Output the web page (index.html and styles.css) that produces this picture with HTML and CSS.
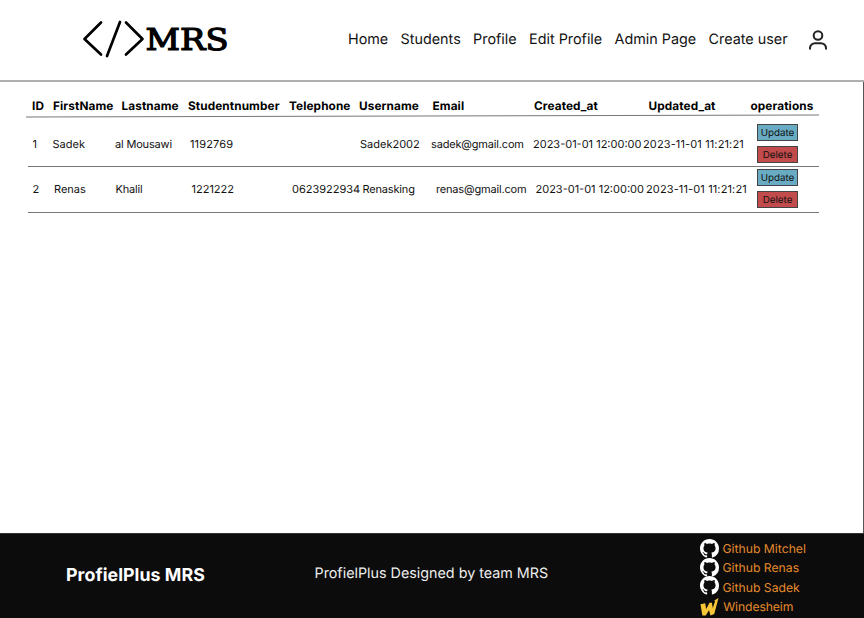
FILE: index.html
```html
<!DOCTYPE html>
<html lang="en">
<head>
<meta charset="utf-8">
<title>ProfielPlus MRS</title>
<link rel="stylesheet" href="styles.css">
</head>
<body>
<svg class="defs" aria-hidden="true">
<symbol id="github" viewBox="0 0 16 16"><path d="M8 0C3.58 0 0 3.58 0 8c0 3.54 2.29 6.53 5.47 7.59.4.07.55-.17.55-.38 0-.19-.01-.82-.01-1.49-2.01.37-2.53-.49-2.69-.94-.09-.23-.48-.94-.82-1.13-.28-.15-.68-.52-.01-.53.63-.01 1.08.58 1.23.82.72 1.21 1.87.87 2.33.66.07-.52.28-.87.51-1.07-1.78-.2-3.64-.89-3.64-3.95 0-.87.31-1.59.82-2.15-.08-.2-.36-1.02.08-2.12 0 0 .67-.21 2.2.82.64-.18 1.32-.27 2-.27s1.36.09 2 .27c1.53-1.04 2.2-.82 2.2-.82.44 1.1.16 1.92.08 2.12.51.56.82 1.27.82 2.15 0 3.07-1.87 3.75-3.65 3.95.29.25.54.73.54 1.48 0 1.07-.01 1.93-.01 2.2 0 .21.15.46.55.38A8.01 8.01 0 0 0 16 8c0-4.42-3.58-8-8-8z"/></symbol>
</svg>
<header class="header">
<svg class="logo" viewBox="0 0 150 40"><path d="M19 3.500 2.500 20 19 35.500M38 3 25 37M44 3.500l16.500 16.500L44 35.500"/><text x="63.500" y="30.700" textLength="83" lengthAdjust="spacingAndGlyphs">MRS</text></svg>
<nav class="nav"><a>Home</a><a>Students</a><a>Profile</a><a>Edit Profile</a><a>Admin Page</a><a>Create user</a></nav>
<svg class="user" viewBox="0 0 20 22"><circle cx="10" cy="6.500" r="4.300"/><path d="M2 20.500v-1.200c0-3.200 2.600-5.100 5-5.100h6c2.400 0 5 1.900 5 5.100v1.200"/></svg>
</header>
<main class="main">
<div class="row head"><b>ID</b><b>FirstName</b><b>Lastname</b><b>Studentnumber</b><b>Telephone</b><b>Username</b><b>Email</b><b>Created_at</b><b>Updated_at</b><b>operations</b></div>
<svg class="rule" viewBox="0 0 793 4"><path d="M0 3 793 1"/></svg>
<div class="row first"><span>1</span><span>Sadek</span><span class="tight">al Mousawi</span><span class="number">1192769</span><span></span><span>Sadek2002</span><span class="tight">sadek@gmail.com</span><span>2023-01-01 12:00:00</span><span class="number">2023-11-01 11:21:21</span><div class="ops"><button class="update">Update</button><button class="delete">Delete</button></div></div>
<div class="row second"><span>2</span><span>Renas</span><span class="tight">Khalil</span><span>1221222</span><span>0623922934</span><span class="tight">Renasking</span><span class="tight">renas@gmail.com</span><span>2023-01-01 12:00:00</span><span class="number">2023-11-01 11:21:21</span><div class="ops"><button class="update">Update</button><button class="delete">Delete</button></div></div>
</main>
<footer class="footer">
<strong class="brand">ProfielPlus MRS</strong>
<span class="credit">ProfielPlus Designed by team MRS</span>
<div class="links">
<a><svg><use href="#github"/></svg><span>Github Mitchel</span></a>
<a><svg><use href="#github"/></svg><span>Github Renas</span></a>
<a><svg><use href="#github"/></svg><span>Github Sadek</span></a>
<a><svg class="wind" viewBox="0 0 20 19"><path d="M.5 7 5.500 6 6.500 12 10 5.500 12.500 5.500 13.500 11 16 3.500 14.500 3.500 19.500 .5 15 17.500 11 19 9.500 13.500 6 19H2.500z"/></svg><span>Windesheim</span></a>
</div>
</footer>
</body>
</html>
```
FILE: styles.css
```css
* { box-sizing: border-box; }
body { margin: 0; width: 864px; height: 618px; overflow: hidden; display: flex; flex-direction: column; font-family: Inter, sans-serif; color: #111; background: #fff; text-rendering: geometricPrecision; }
.defs { display: none; }
.header { height: 82px; flex: none; display: flex; border-bottom: 2px solid #b0b0b0; }
.logo { width: 150px; height: 40px; margin: 19px 0 0 82px; flex: none; }
.logo path { fill: none; stroke: #000; stroke-width: 2.7; stroke-linecap: round; stroke-linejoin: round; }
.logo text { font: 30px "DejaVu Serif", serif; stroke: #000; stroke-width: 1.2; }
.nav { display: flex; gap: 12.4px; margin: 30px 0 0 116px; width: 459.5px; font-size: 14.35px; line-height: 20px; white-space: nowrap; }
.user { width: 20px; height: 22px; margin-top: 29px; fill: none; stroke: #222; stroke-width: 2; }
.main { flex: none; height: 451px; border-right: 1px solid #555; }
.row { display: grid; align-items: center; white-space: nowrap; font-size: 11px; }
.head { height: 32px; padding: 16px 0 0 32px; line-height: 16px; font-size: 11.8px; letter-spacing: .1px; color: #000; grid-template-columns: 21px 68.5px 66.5px 101px 70px 73.500px 101.500px 114.500px 102px auto; }
.rule { display: block; width: 793px; height: 4px; margin-left: 26px; stroke: #777; }
.first, .second { width: 791.5px; margin-left: 27.5px; padding-left: 5px; border-bottom: 1px solid #777; }
.first { height: 49px; padding-top: 4px; grid-template-columns: 20px 62.500px 75px 100px 70px 71px 102px 110px 114px auto; }
.second { height: 46px; padding-bottom: 2px; grid-template-columns: 21.500px 61.500px 76px 100.500px 70.500px 73.500px 99.500px 110.500px 111px auto; }
.tight { letter-spacing: -.17px; }
.number { letter-spacing: .13px; }
.ops { display: grid; gap: 5px; width: 41px; margin-top: -1px; }
button { display: block; height: 17px; padding: 2px 0 0; border: 1px solid #444; font: 9.8px/13px Inter, sans-serif; color: #111; text-rendering: inherit; }
.update { background: #68abc2; }
.delete { background: #c24b4b; }
.footer { flex: none; height: 85px; display: flex; background: #0c0c0c; color: #eee; border-top: 1px solid #333; }
.brand { width: 248.500px; flex: none; margin: 30px 0 0 66px; font-size: 17.800px; letter-spacing: .05px; line-height: 24px; color: #fff; }
.credit { width: 385px; flex: none; margin-top: 29px; font-size: 14.320px; line-height: 22px; }
.links { display: flex; flex-direction: column; margin-top: 5px; font-size: 12.200px; line-height: 19px; color: #e58a2c; white-space: nowrap; }
.links a { display: flex; height: 19.400px; }
.links a:nth-child(2) { margin-top: -.5px; }
.links a:nth-child(3) svg { margin-top: -1px; }
.links a:nth-child(3) span { margin-top: .6px; }
.links a:nth-child(4) span { margin: .6px 0 0 .7px; letter-spacing: -.1px; }
.links svg { width: 19px; height: 19px; margin-right: 4px; fill: #fff; flex: none; }
.links .wind { fill: #f6c638; }
```
